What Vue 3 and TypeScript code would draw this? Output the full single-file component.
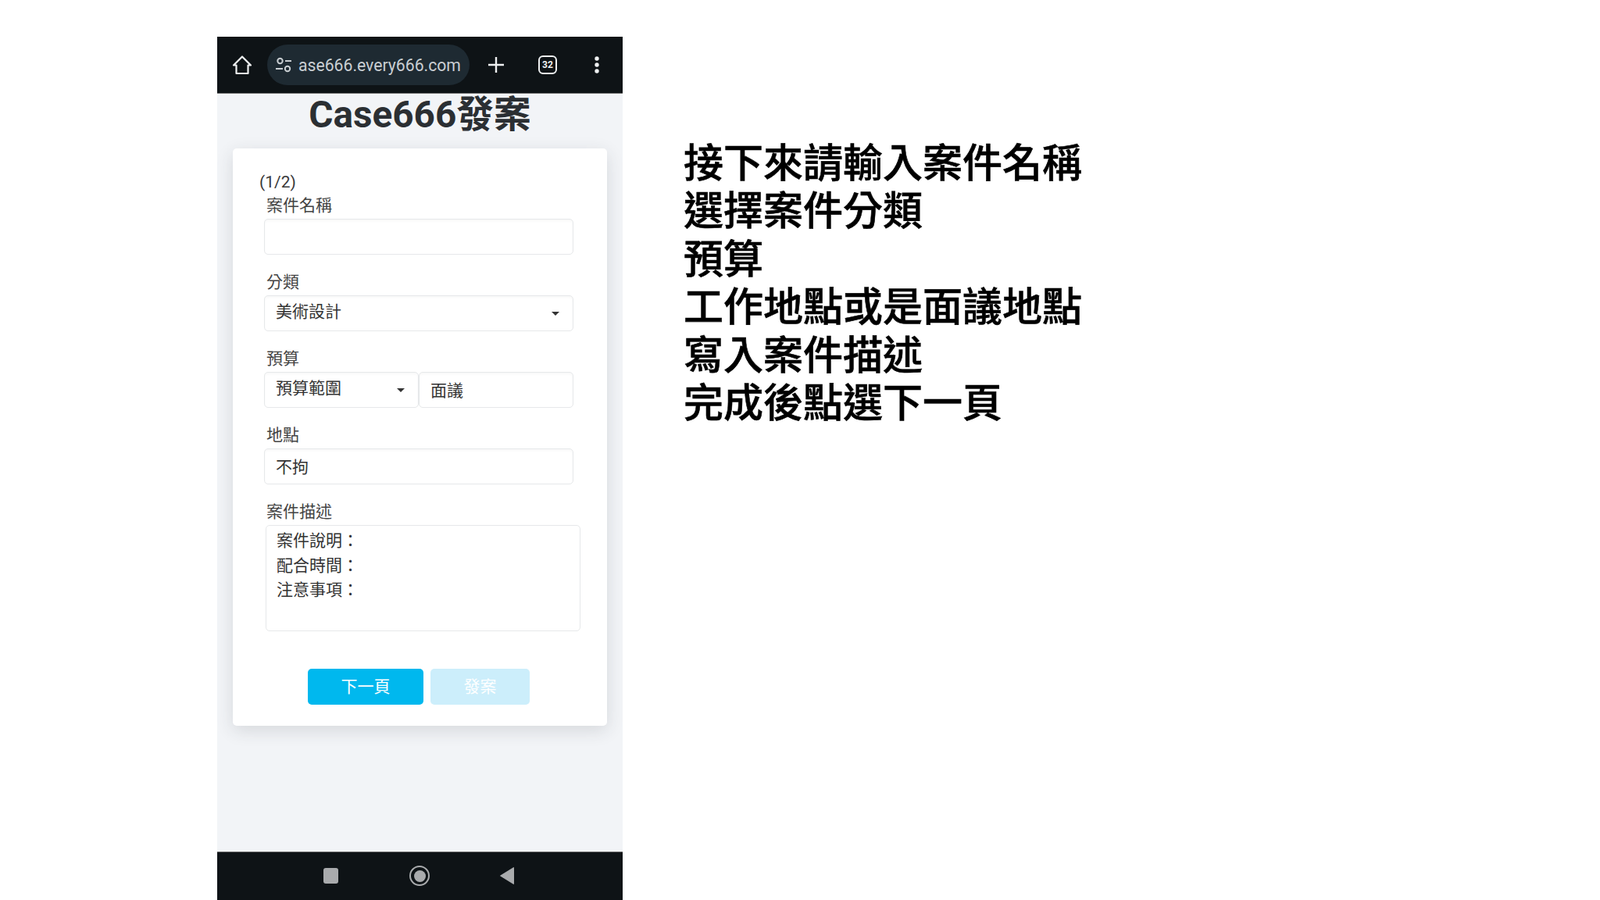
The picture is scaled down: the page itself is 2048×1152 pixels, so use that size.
<script setup lang="ts">
import { ref } from 'vue'

interface Option { value: string; label: string }

const category = ref('design')
const budget = ref('range')
const categories: Option[] = [{ value: 'design', label: '美術設計' }]
const budgets: Option[] = [{ value: 'range', label: '預算範圍' }]
const description = '案件說明：\n配合時間：\n注意事項：'
const steps: string[] = [
  '接下來請輸入案件名稱',
  '選擇案件分類',
  '預算',
  '工作地點或是面議地點',
  '寫入案件描述',
  '完成後點選下一頁',
]
</script>

<template>
  <div class="page">
    <section class="phone">
      <header class="topbar">
        <svg class="home" viewBox="0 0 26 26" width="26" height="26" fill="none" stroke="#eef0f1" stroke-width="2.2" stroke-linejoin="round">
          <path d="M2 13.500 13 2.500l11 11h-3.500V24h-15V13.500z" />
        </svg>
        <div class="pill">
          <svg viewBox="0 0 24 24" width="24" height="24" fill="none" stroke="#c9ced2" stroke-width="2">
            <circle cx="7.500" cy="7" r="3.200" />
            <path d="M14 7h8M2 17h9" />
            <circle cx="17" cy="17" r="3.200" />
          </svg>
          <span class="url">ase666.every666.com</span>
        </div>
        <svg class="plus" viewBox="0 0 24 24" width="24" height="24" fill="none" stroke="#eef0f1" stroke-width="2.400">
          <path d="M12 2v20M2 12h20" />
        </svg>
        <div class="tabs">32</div>
        <svg class="more" viewBox="0 0 8 24" width="8" height="24" fill="#eef0f1">
          <circle cx="4" cy="4" r="2.700" />
          <circle cx="4" cy="12" r="2.700" />
          <circle cx="4" cy="20" r="2.700" />
        </svg>
      </header>

      <main class="content">
        <h1 class="title">Case666發案</h1>
        <form class="card" @submit.prevent>
          <div class="step">(1/2)</div>

          <div class="group">
            <label class="label">案件名稱</label>
            <input class="field" type="text" />
          </div>

          <div class="group">
            <label class="label">分類</label>
            <div class="select-wrap">
              <select v-model="category" class="field select">
                <option v-for="o in categories" :key="o.value" :value="o.value">{{ o.label }}</option>
              </select>
              <span class="caret"></span>
            </div>
          </div>

          <div class="group">
            <label class="label">預算</label>
            <div class="split">
              <div class="select-wrap half">
                <select v-model="budget" class="field select">
                  <option v-for="o in budgets" :key="o.value" :value="o.value">{{ o.label }}</option>
                </select>
                <span class="caret"></span>
              </div>
              <input class="field half" type="text" value="面議" />
            </div>
          </div>

          <div class="group">
            <label class="label">地點</label>
            <input class="field" type="text" value="不拘" />
          </div>

          <div class="group last">
            <label class="label">案件描述</label>
            <textarea class="area" :value="description"></textarea>
          </div>

          <div class="actions">
            <button class="btn primary" type="button">下一頁</button>
            <button class="btn disabled" type="button" disabled>發案</button>
          </div>
        </form>
      </main>

      <footer class="navbar">
        <span class="nav-square"></span>
        <span class="nav-circle"><span class="nav-dot"></span></span>
        <svg class="nav-back" viewBox="0 0 20 24" width="20" height="24" fill="#a9abad" stroke="#a9abad" stroke-width="1" stroke-linejoin="round">
          <path d="M18.500 1.500v21L1.500 12z" />
        </svg>
      </footer>
    </section>

    <ol class="steps">
      <li v-for="s in steps" :key="s">{{ s }}</li>
    </ol>
  </div>
</template>

<style scoped>
.page {
  display: flex;
  align-items: flex-start;
  width: 2048px;
  height: 1152px;
  box-sizing: border-box;
  padding: 47px 0 0 278px;
  overflow: hidden;
  background: #fff;
  font-family: Roboto, "Noto Sans CJK TC", sans-serif;
  color: #333;
}
.phone {
  display: flex;
  flex-direction: column;
  width: 519px;
  height: 1105px;
  flex: none;
  background: #f2f4f7;
}
.topbar {
  display: flex;
  align-items: center;
  height: 73px;
  flex: none;
  background: #0e1316;
  border-bottom: 1px solid #777;
  box-sizing: border-box;
}
.home {
  margin-left: 19px;
  flex: none;
}
.pill {
  display: flex;
  align-items: center;
  width: 259px;
  height: 52px;
  margin-left: 19px;
  padding-left: 9px;
  box-sizing: border-box;
  border-radius: 26px;
  background: #1e2a32;
  flex: none;
}
.url {
  margin-left: 7px;
  font-size: 21.200px;
  color: #c9ced2;
  white-space: nowrap;
}
.plus {
  margin-left: 22px;
  flex: none;
}
.tabs {
  display: flex;
  align-items: center;
  justify-content: center;
  width: 24px;
  height: 24px;
  margin-left: 42px;
  box-sizing: border-box;
  border: 2px solid #eef0f1;
  border-radius: 6px;
  font-size: 12px;
  font-weight: 700;
  color: #eef0f1;
  flex: none;
}
.more {
  margin-left: 47px;
  flex: none;
}
.content {
  flex: 1;
  min-height: 0;
  padding: 0 20px;
}
.title {
  margin: 0 0 17px;
  height: 53px;
  line-height: 54px;
  font-size: 47.700px;
  font-weight: 700;
  text-align: center;
  color: #2b2f33;
}
.card {
  padding: 29px 34px 27px 34px;
  background: #fff;
  border-radius: 5px;
  box-shadow: 0 6px 22px rgba(40, 50, 60, 0.14);
}
.step {
  height: 28px;
  line-height: 28px;
  font-size: 21px;
  color: #3a3a3a;
  margin-bottom: 2px;
}
.group {
  margin-bottom: 21px;
}
.group.last {
  margin-bottom: 0;
}
.label {
  display: block;
  height: 28px;
  line-height: 28px;
  margin-bottom: 3px;
  padding-left: 3px;
  margin-left: 6px;
  font-size: 21px;
  color: #444;
}
.field {
  display: block;
  width: 396px;
  height: 46px;
  margin-left: 6px;
  box-sizing: border-box;
  padding: 0 14px 2px;
  border: 1.500px solid #e6e8ea;
  border-radius: 5px;
  background: #fff;
  box-shadow: inset 0 2px 3px rgba(0, 0, 0, 0.03);
  font: 400 21px Roboto, "Noto Sans CJK TC", sans-serif;
  color: #333;
  outline: none;
}
.select {
  appearance: none;
  padding-bottom: 4px;
}
.select-wrap {
  position: relative;
}
.caret {
  position: absolute;
  top: 21px;
  right: 18px;
  width: 0;
  height: 0;
  border-left: 5px solid transparent;
  border-right: 5px solid transparent;
  border-top: 5px solid #333;
}
.select-wrap:not(.half) .caret {
  right: 27px;
}
.split {
  display: flex;
  margin-left: 6px;
}
.split .field {
  margin-left: 0;
}
.half {
  width: 198px;
}
.split .select-wrap .field {
  width: 198px;
}
.area {
  display: block;
  width: 403px;
  height: 136px;
  margin-left: 8px;
  box-sizing: border-box;
  padding: 4px 13px;
  border: 1.500px solid #e6e8ea;
  border-radius: 5px;
  background: #fff;
  font: 400 21px/31.500px Roboto, "Noto Sans CJK TC", sans-serif;
  color: #333;
  outline: none;
  resize: none;
}
.actions {
  display: flex;
  justify-content: center;
  gap: 9px;
  margin-top: 48px;
  padding-right: 3px;
}
.btn {
  height: 46px;
  padding: 0 0 5px;
  border: none;
  border-radius: 5px;
  font: 400 21px Roboto, "Noto Sans CJK TC", sans-serif;
  color: #fff;
}
.primary {
  width: 148px;
  background: #00b8ee;
}
.disabled {
  width: 127px;
  background: #cceefb;
}
.navbar {
  display: flex;
  align-items: center;
  justify-content: center;
  gap: 91px;
  height: 62px;
  padding: 0 2px 1px 0;
  flex: none;
  background: #0e1316;
  border-top: 1px solid #666;
  box-sizing: border-box;
}
.nav-square {
  width: 19px;
  height: 20px;
  border-radius: 3px;
  background: #a9abad;
}
.nav-circle {
  display: flex;
  align-items: center;
  justify-content: center;
  width: 26px;
  height: 26px;
  box-sizing: border-box;
  border: 2.500px solid #a9abad;
  border-radius: 50%;
}
.nav-dot {
  width: 15px;
  height: 15px;
  border-radius: 50%;
  background: #a9abad;
}
.nav-back {
  margin-left: -2px;
}
.steps {
  list-style: none;
  margin: 128px 0 0 78px;
  padding: 0;
  font-family: "Noto Sans CJK TC", sans-serif;
  font-size: 51px;
  font-weight: 500;
  -webkit-text-stroke: 0.6px #000;
  line-height: 61.400px;
  color: #000;
  white-space: nowrap;
}
</style>

<style>
html,
body {
  margin: 0;
  background: #fff;
}
</style>
